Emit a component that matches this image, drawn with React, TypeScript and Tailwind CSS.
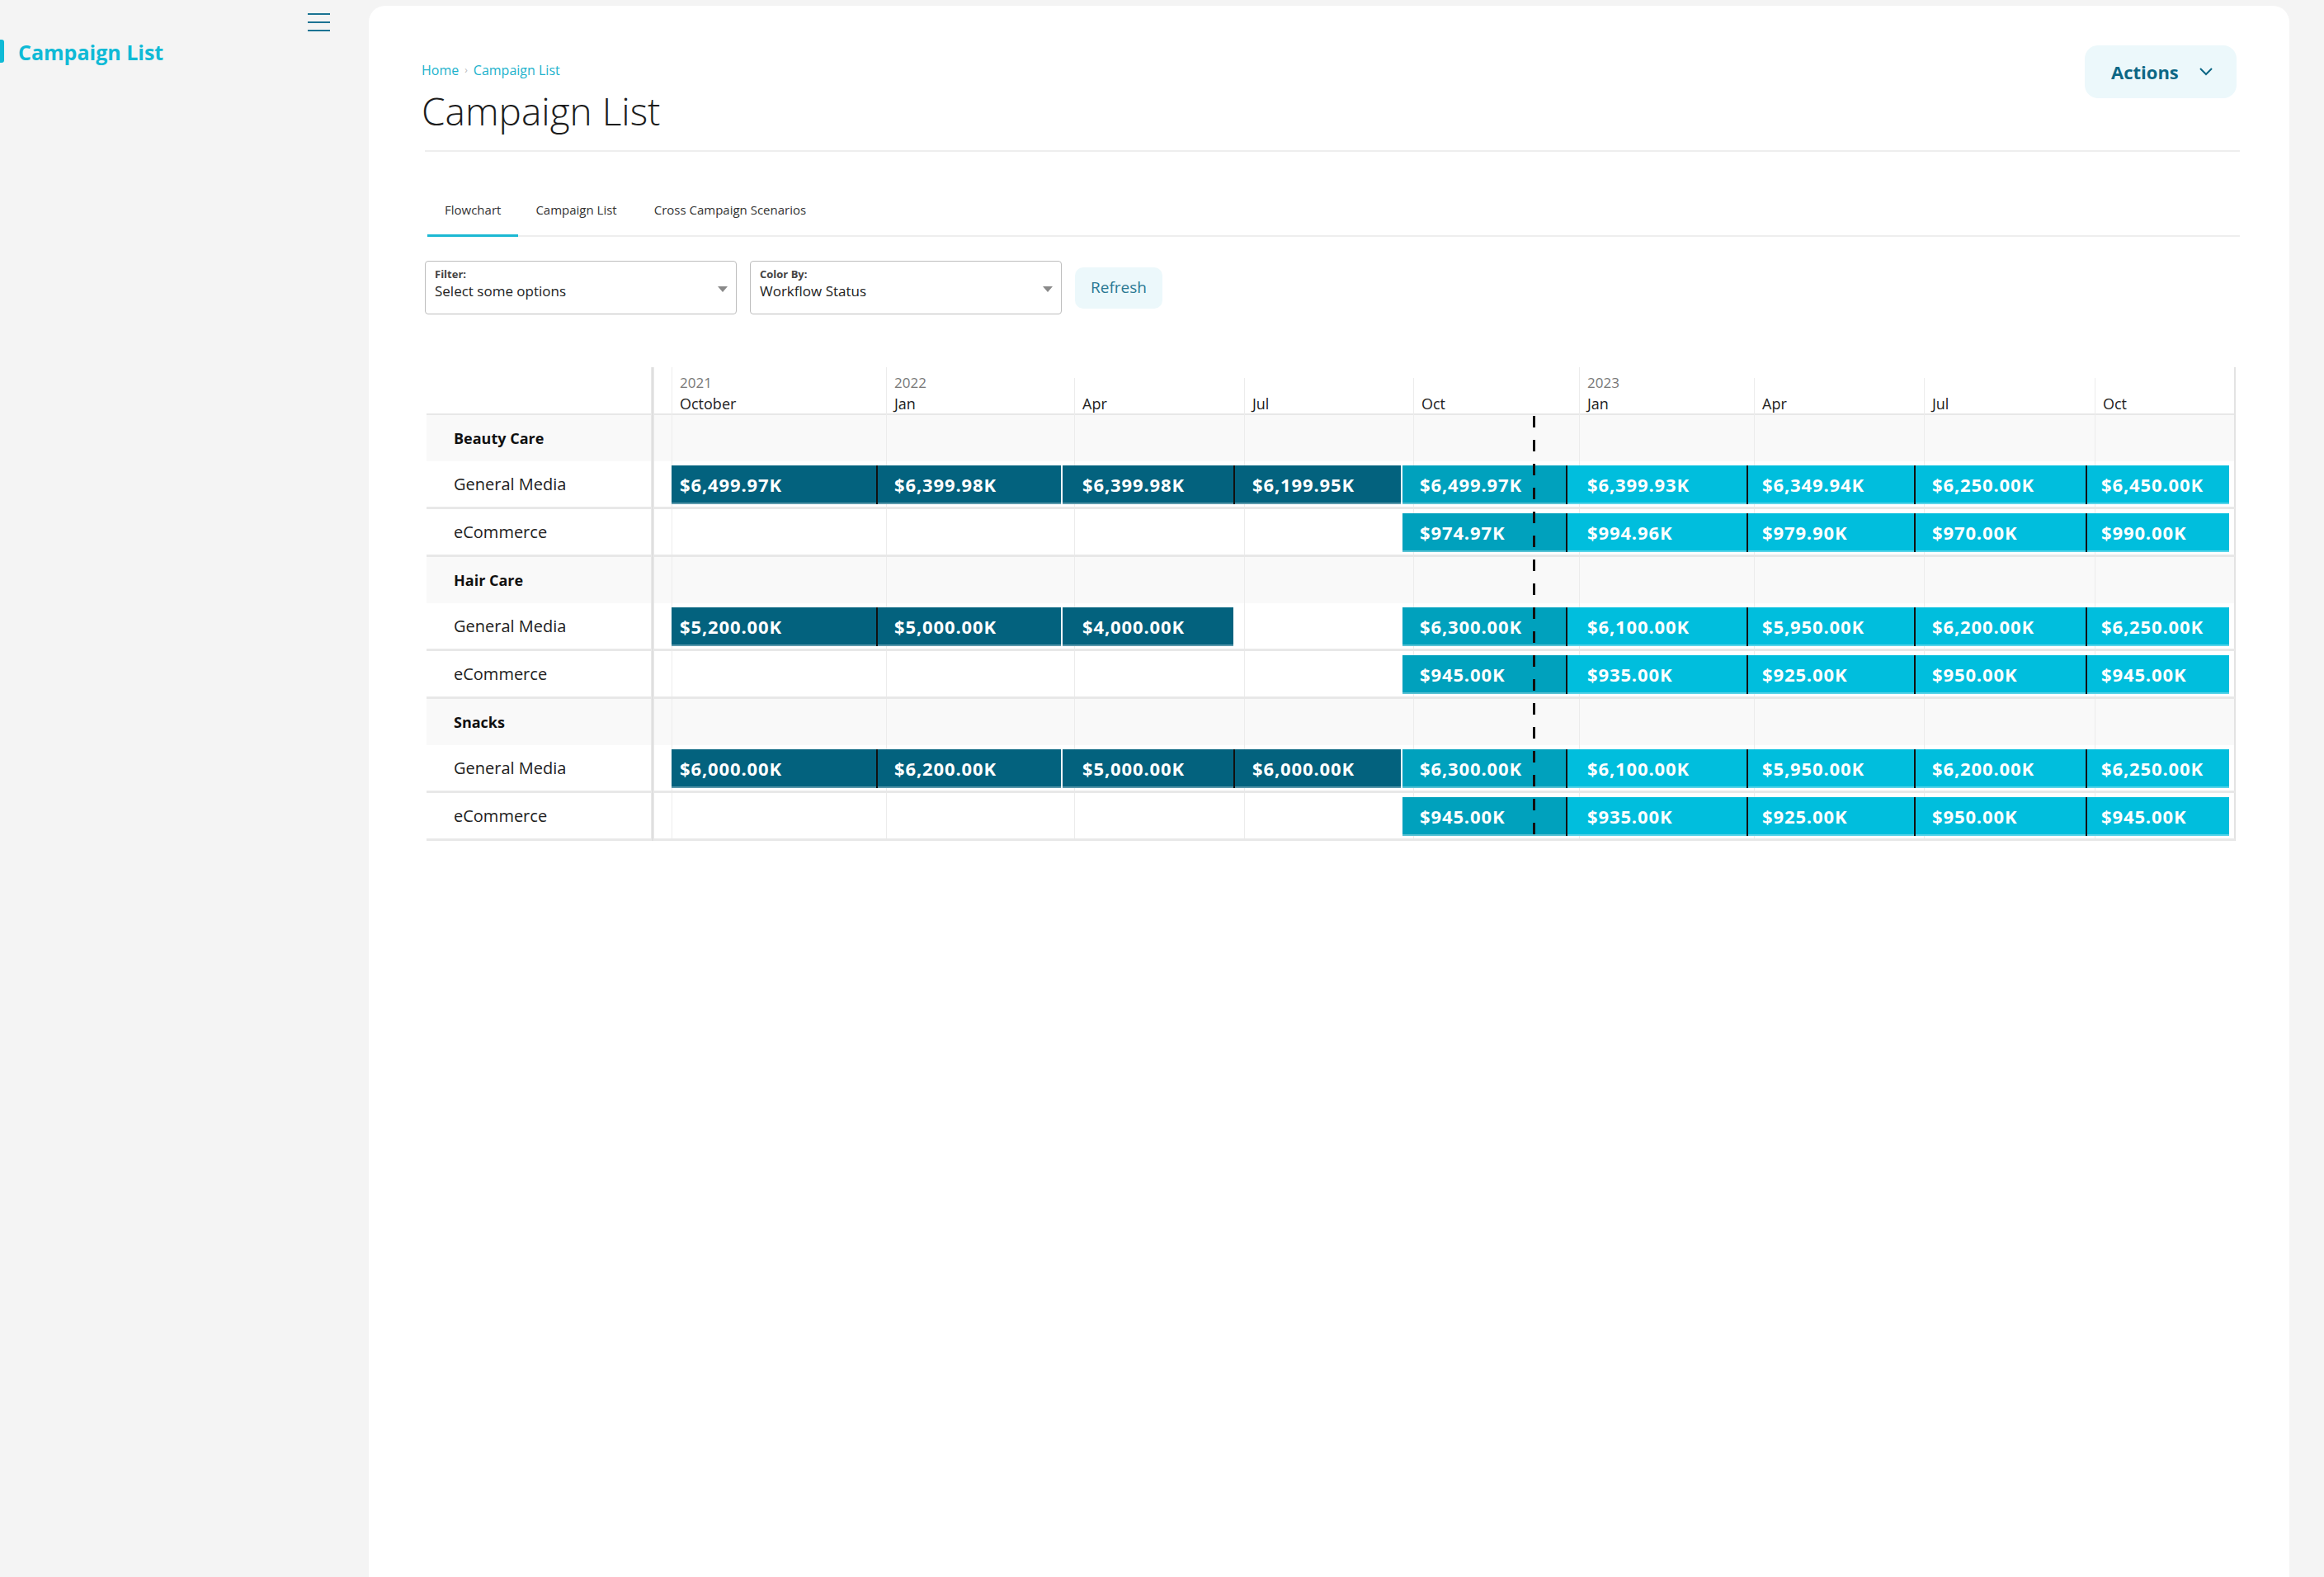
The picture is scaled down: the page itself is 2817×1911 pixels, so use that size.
import React from 'react';
import clsx from 'clsx';

type Tone = 'dark' | 'mid' | 'light';

const columns = [
  { width: 260, year: '2021', month: 'October' },
  { width: 228, year: '2022', month: 'Jan' },
  { width: 206, month: 'Apr' },
  { width: 205, month: 'Jul' },
  { width: 201, month: 'Oct' },
  { width: 212, year: '2023', month: 'Jan' },
  { width: 206, month: 'Apr' },
  { width: 207, month: 'Jul' },
  { width: 169, month: 'Oct' },
];

// spend slots on the timeline (quarters), edge = divider drawn on the left
const slots: { width: number; pad: number; edge: 'none' | 'black' | 'white'; tone: Tone }[] = [
  { width: 248, pad: 10, edge: 'none', tone: 'dark' },
  { width: 224, pad: 20, edge: 'black', tone: 'dark' },
  { width: 209, pad: 24, edge: 'white', tone: 'dark' },
  { width: 203, pad: 21, edge: 'black', tone: 'dark' },
  { width: 200, pad: 21, edge: 'white', tone: 'mid' },
  { width: 219, pad: 24, edge: 'black', tone: 'light' },
  { width: 203, pad: 17, edge: 'black', tone: 'light' },
  { width: 208, pad: 20, edge: 'black', tone: 'light' },
  { width: 174, pad: 17, edge: 'black', tone: 'light' },
];

const toneClass: Record<Tone, string> = {
  dark: 'bg-[#03627e]',
  mid: 'bg-[#00a1bd]',
  light: 'bg-[#00bedd]',
};

const edgeClass = {
  none: '',
  black: 'border-l-2 border-[#111111]',
  white: 'border-l-2 border-white',
};

const groups = [
  {
    name: 'Beauty Care',
    items: [
      {
        label: 'General Media',
        values: ['$6,499.97K', '$6,399.98K', '$6,399.98K', '$6,199.95K', '$6,499.97K', '$6,399.93K', '$6,349.94K', '$6,250.00K', '$6,450.00K'],
      },
      {
        label: 'eCommerce',
        values: [null, null, null, null, '$974.97K', '$994.96K', '$979.90K', '$970.00K', '$990.00K'],
      },
    ],
  },
  {
    name: 'Hair Care',
    items: [
      {
        label: 'General Media',
        values: ['$5,200.00K', '$5,000.00K', '$4,000.00K', null, '$6,300.00K', '$6,100.00K', '$5,950.00K', '$6,200.00K', '$6,250.00K'],
      },
      {
        label: 'eCommerce',
        values: [null, null, null, null, '$945.00K', '$935.00K', '$925.00K', '$950.00K', '$945.00K'],
      },
    ],
  },
  {
    name: 'Snacks',
    items: [
      {
        label: 'General Media',
        values: ['$6,000.00K', '$6,200.00K', '$5,000.00K', '$6,000.00K', '$6,300.00K', '$6,100.00K', '$5,950.00K', '$6,200.00K', '$6,250.00K'],
      },
      {
        label: 'eCommerce',
        values: [null, null, null, null, '$945.00K', '$935.00K', '$925.00K', '$950.00K', '$945.00K'],
      },
    ],
  },
];

function Separator() {
  return <div className="w-[4px] shrink-0 bg-[linear-gradient(to_right,#eeeeee,#dadada,#eeeeee)]" />;
}

function SelectBox({ label, value }: { label: string; value: string }) {
  return (
    <div className="flex h-[65px] w-[378px] items-center rounded-[4px] border border-[#bdbdbd] pl-[11px] pr-[10px]">
      <div className="flex-1 self-start pt-[7px]">
        <div className="text-[13px] font-bold leading-[16px] text-[#444]">{label}</div>
        <div className="mt-[2px] text-[17px] leading-[22px] text-[#222]">{value}</div>
      </div>
      <div className="mt-[3px] h-0 w-0 border-l-[6px] border-r-[6px] border-t-[7px] border-l-transparent border-r-transparent border-t-[#8a8a8a]" />
    </div>
  );
}

function DataRow({ label, values }: { label: string; values: (string | null)[] }) {
  return (
    <div className="flex h-[58px]">
      <div className="flex w-[272px] items-center border-b-[3px] border-[#e8e8e8] pl-[33px] text-[20px] text-[#222]">
        {label}
      </div>
      <Separator />
      <div className="relative z-10 flex flex-1 border-b-[3px] border-[#e8e8e8] pl-[21px] pt-[5px]">
        {slots.map((slot, i) => {
          const v = values[i];
          if (!v) return <div key={i} style={{ width: slot.width }} />;
          return (
            <div
              key={i}
              className={clsx(
                'flex h-[47px] shrink-0 items-center text-[22px] font-bold tracking-[0.04em] text-white shadow-[inset_0_-2px_0_rgba(255,255,255,0.35)]',
                toneClass[slot.tone],
                edgeClass[slot.edge]
              )}
              style={{ width: slot.width, paddingLeft: slot.pad }}
            >
              {v}
            </div>
          );
        })}
      </div>
    </div>
  );
}

function GroupRow({ name }: { name: string }) {
  return (
    <div className="flex h-[56px]">
      <div className="flex w-[272px] items-center bg-[#f9f9f9] pl-[33px] text-[18px] font-bold text-[#111]">{name}</div>
      <Separator />
      <div className="flex-1 bg-[#f9f9f9]" />
    </div>
  );
}

function Timeline() {
  return (
    <div className="relative ml-[6px] mt-[64px] w-[2192px]">
      {/* header */}
      <div className="flex h-[58px]">
        <div className="w-[272px] border-b-2 border-[#e8e8e8]" />
        <Separator />
        <div className="flex flex-1 border-b-2 border-[#e8e8e8] pl-[21px]">
          {columns.map((c, i) => (
            <div key={i} className="pl-[10px] pt-[9px]" style={{ width: c.width }}>
              <div className="h-[20px] text-[17px] leading-[20px] text-[#777]">{c.year ?? ''}</div>
              <div className="mt-[4px] text-[18px] leading-[22px] text-[#222]">{c.month}</div>
            </div>
          ))}
        </div>
      </div>

      {groups.map((g) => (
        <React.Fragment key={g.name}>
          <GroupRow name={g.name} />
          {g.items.map((it) => (
            <DataRow key={it.label} label={it.label} values={it.values} />
          ))}
        </React.Fragment>
      ))}

      {/* column grid lines */}
      <div className="pointer-events-none absolute bottom-0 left-[297px] top-0 flex">
        {columns.map((c, i) => (
          <div
            key={i}
            className={clsx('border-l border-[#ececec]', c.year ? 'mt-0' : 'mt-[13px]')}
            style={{ width: c.width }}
          />
        ))}
        <div className="w-0 border-r-2 border-[#e3e3e3]" />
      </div>

      {/* today marker */}
      <div className="pointer-events-none absolute bottom-[3px] left-[1341px] top-[59px] z-20 w-[3px] bg-[repeating-linear-gradient(to_bottom,#111111_0px,#111111_14px,transparent_14px,transparent_29px)]" />
    </div>
  );
}

export default function App() {
  return (
    <div className="flex min-h-screen bg-[#f4f4f4] font-['Open_Sans',sans-serif] text-[#222]">
      <aside className="w-[447px] shrink-0">
        <div className="flex justify-end pr-[47px] pt-[16px]">
          <div className="flex w-[27px] flex-col gap-[8px]">
            <span className="h-[2px] bg-[#1b7393]" />
            <span className="h-[2px] bg-[#1b7393]" />
            <span className="h-[2px] bg-[#1b7393]" />
          </div>
        </div>
        <div className="mt-[10px] flex h-[28px] items-center">
          <span className="h-[28px] w-[5px] rounded-r-[3px] bg-[#0fbad6]" />
          <span className="ml-[17px] mt-[2px] text-[25px] font-bold leading-[28px] text-[#0fbad6]">Campaign List</span>
        </div>
      </aside>

      <main className="flex flex-1 flex-col pr-[42px] pt-[7px]">
        <div className="flex-1 rounded-t-[20px] bg-white pl-[64px] pr-[60px] pt-[48px]">
          <div className="flex items-start justify-between">
            <div className="mt-[20px]">
              <div className="flex items-center text-[16px] leading-[20px] text-[#1cb2cc]">
                <span>Home</span>
                <span className="mx-[7px] text-[12px] text-[#bbbbbb]">›</span>
                <span>Campaign List</span>
              </div>
              <h1 className="mt-[11px] text-[46px] font-light leading-[56px] text-[#1c1c1c]">Campaign List</h1>
            </div>
            <button className="mr-[4px] flex h-[64px] w-[184px] items-center rounded-[16px] bg-[#ecf8fb] pl-[32px] text-[22px] font-bold text-[#0c6785]">
              Actions
              <svg className="ml-[25px]" width="16" height="10" viewBox="0 0 16 10" fill="none">
                <polyline points="1,1 8,8 15,1" stroke="#0c6785" strokeWidth="2" />
              </svg>
            </button>
          </div>

          <div className="ml-[4px] mt-[20px] h-[2px] bg-[#eeeeee]" />

          <div className="ml-[7px] mt-[60px] flex border-b-2 border-[#eeeeee]">
            {['Flowchart', 'Campaign List', 'Cross Campaign Scenarios'].map((t, i) => (
              <div
                key={t}
                className={clsx(
                  '-mb-[2px] border-b-[3px] px-[21px] pb-[20px] text-[15px] leading-[20px] text-[#333]',
                  i === 0 ? 'border-[#1bb8d3]' : 'border-transparent',
                  i === 2 ? 'ml-[3px]' : ''
                )}
              >
                {t}
              </div>
            ))}
          </div>

          <div className="ml-[4px] mt-[29px] flex items-center gap-[16px]">
            <SelectBox label="Filter:" value="Select some options" />
            <SelectBox label="Color By:" value="Workflow Status" />
            <button className="h-[50px] w-[106px] rounded-[10px] bg-[#ecf8fb] text-[19px] text-[#2b7893]">Refresh</button>
          </div>

          <Timeline />
        </div>
      </main>
    </div>
  );
}
